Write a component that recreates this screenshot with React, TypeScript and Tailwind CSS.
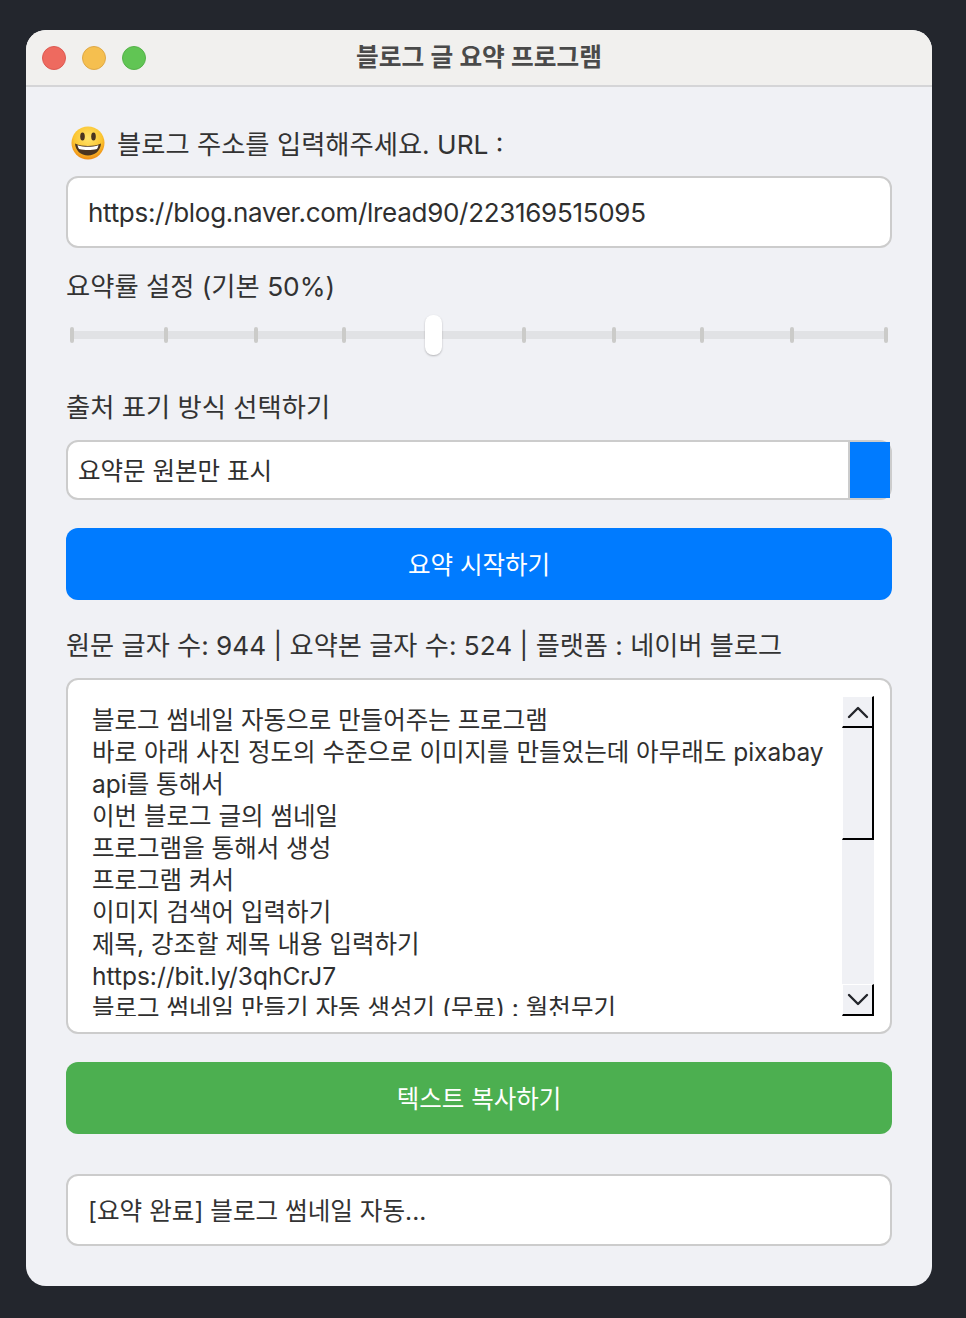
const font = "font-['Inter','Noto_Sans_CJK_KR',sans-serif]";

const summaryLines = [
  "블로그 썸네일 자동으로 만들어주는 프로그램",
  "바로 아래 사진 정도의 수준으로 이미지를 만들었는데 아무래도 pixabay",
  "api를 통해서",
  "이번 블로그 글의 썸네일",
  "프로그램을 통해서 생성",
  "프로그램 켜서",
  "이미지 검색어 입력하기",
  "제목, 강조할 제목 내용 입력하기",
  "https://bit.ly/3qhCrJ7",
  "블로그 썸네일 만들기 자동 생성기 (무료) : 월천무기",
];

// gaps between ticks are not even in the capture
const tickGaps = ["ml-0", "ml-[90px]", "ml-[86px]", "ml-[84px]", "ml-[176px]", "ml-[86px]", "ml-[84px]", "ml-[86px]", "ml-[90px]"];

function Smiley() {
  return (
    <svg width="36" height="36" viewBox="0 0 36 36" className="shrink-0">
      <defs>
        <radialGradient id="face" cx="50%" cy="35%" r="65%">
          <stop offset="0%" stopColor="#ffe46b" />
          <stop offset="65%" stopColor="#fbc531" />
          <stop offset="100%" stopColor="#ee8a12" />
        </radialGradient>
      </defs>
      <circle cx="18" cy="18" r="16.500" fill="url(#face)" />
      <ellipse cx="12.500" cy="11.500" rx="2.300" ry="4" fill="#4a3420" />
      <ellipse cx="23.500" cy="11.500" rx="2.300" ry="4" fill="#4a3420" />
      <path d="M5 18.500c4 1.800 8.500 2.500 13 2.500s9-.7 13-2.500c-.4 7-5.800 12-13 12S5.400 25.500 5 18.500z" fill="#4a3420" />
      <path d="M7.500 20.300c3.300 1 7 1.500 10.500 1.500s7.200-.5 10.500-1.500c-.3 1.500-.8 2.700-1.500 3.700-2.900.8-6 1.100-9 1.100s-6.100-.3-9-1.100c-.7-1-1.200-2.200-1.500-3.700z" fill="#fff" />
    </svg>
  );
}

function ScrollButton({ up }: { up?: boolean }) {
  return (
    <div className="flex h-8 w-8 items-center justify-center border-t border-l border-r-2 border-b-2 border-t-white border-l-white border-r-black border-b-black bg-[#f0f1f5]">
      <svg width="22" height="14" viewBox="0 0 22 14" fill="none" stroke="#23252a" strokeWidth="2.400" strokeLinecap="round" strokeLinejoin="round">
        <path d={up ? "M2 12 11 3l9 9" : "M2 2l9 9 9-9"} />
      </svg>
    </div>
  );
}

export default function App() {
  return (
    <div className={`${font} min-h-[1318px] bg-[#23262d] pt-[30px] pl-[26px] text-[#333]`}>
      <div className="h-[1256px] w-[906px] overflow-hidden rounded-[20px] bg-[#f0f1f5]">
        <div className="relative flex h-[57px] items-center justify-center border-b-2 border-[#d5d5d7] bg-[#f1f0ee]">
          <div className="absolute left-4 flex gap-[16px]">
            <span className="h-6 w-6 rounded-full border border-[#dc5a52] bg-[#ee6a5f]" />
            <span className="h-6 w-6 rounded-full border border-[#dea847] bg-[#f5bf4f]" />
            <span className="h-6 w-6 rounded-full border border-[#56b24a] bg-[#61c554]" />
          </div>
          <span className="text-[24.700px] font-semibold text-[#4a4a4a]">블로그 글 요약 프로그램</span>
        </div>

        <div className="flex flex-col px-10">
          <div className="mt-[38px] flex h-9 items-center pt-[3px] text-[26.300px]">
            <span className="-mt-[3px] ml-[4px] mr-[11px]">
              <Smiley />
            </span>
            블로그 주소를 입력해주세요. URL :
          </div>
          <div className="mt-[15px] flex h-[72px] items-center rounded-xl border-2 border-[#ccc] bg-white px-5 text-[26px] tracking-[-0.3px] text-[#2f2f2f]">
            https://blog.naver.com/lread90/223169515095
          </div>

          <div className="mt-5 h-9 pt-[1px] text-[26.300px] leading-9">요약률 설정 (기본 50%)</div>

          <div className="relative mt-[11px] flex h-10 items-center px-1">
            <div className="absolute inset-x-1.5 top-4 h-2 bg-[#e1e2e5]" />
            {tickGaps.map((gap, i) => (
              <span key={i} className={`${gap} relative h-4 w-1 shrink-0 rounded-sm bg-[#cbcbc9]`} />
            ))}
            <span className="absolute left-[359px] top-0 h-10 w-[17px] rounded-lg bg-white shadow-[0_1px_2px_rgba(0,0,0,0.25)]" />
          </div>

          <div className="mt-[34px] h-9 pt-[1px] text-[26.300px] leading-9">출처 표기 방식 선택하기</div>
          <div className="mt-[15px] flex h-[60px] items-stretch rounded-xl border-2 border-[#ccc] bg-white">
            <div className="flex flex-1 items-center pl-2.5 pt-[3px] text-[24.500px] text-[#2f2f2f]">요약문 원본만 표시</div>
            <div className="w-[42px] border-l-2 border-[#ccc] bg-[#007bff]" />
          </div>

          <button className="mt-7 h-[72px] rounded-xl bg-[#007bff] pt-[3px] text-[24.500px] text-white">요약 시작하기</button>

          <div className="mt-[27px] h-9 pt-[1px] text-[26.200px] leading-9">원문 글자 수: 944 | 요약본 글자 수: 524 | 플랫폼 : 네이버 블로그</div>

          <div className="mt-[15px] flex h-[356px] rounded-xl border-2 border-[#ccc] bg-white pt-4 pl-6 pr-4 pb-4">
            <div className="h-[320px] flex-1 overflow-hidden pt-[8px] text-[24.500px] leading-8 text-[#2f2f2f]">
              {summaryLines.map((line) => (
                <div key={line} className="whitespace-nowrap">{line}</div>
              ))}
            </div>
            <div className="flex w-8 flex-col bg-[#f0f1f5]">
              <ScrollButton up />
              <div className="h-[112px] border-r-2 border-b-2 border-l border-r-black border-b-black border-l-white bg-[#f0f1f5]" />
              <div className="flex-1" />
              <ScrollButton />
            </div>
          </div>

          <button className="mt-7 h-[72px] rounded-xl bg-[#4caf50] pt-[3px] text-[24.500px] text-white">텍스트 복사하기</button>

          <div className="mt-10 flex h-[72px] items-center rounded-xl border-2 border-[#ccc] bg-white px-5 pt-[2px] text-[24.600px] text-[#333]">
            [요약 완료] 블로그 썸네일 자동...
          </div>
        </div>
      </div>
    </div>
  );
}
